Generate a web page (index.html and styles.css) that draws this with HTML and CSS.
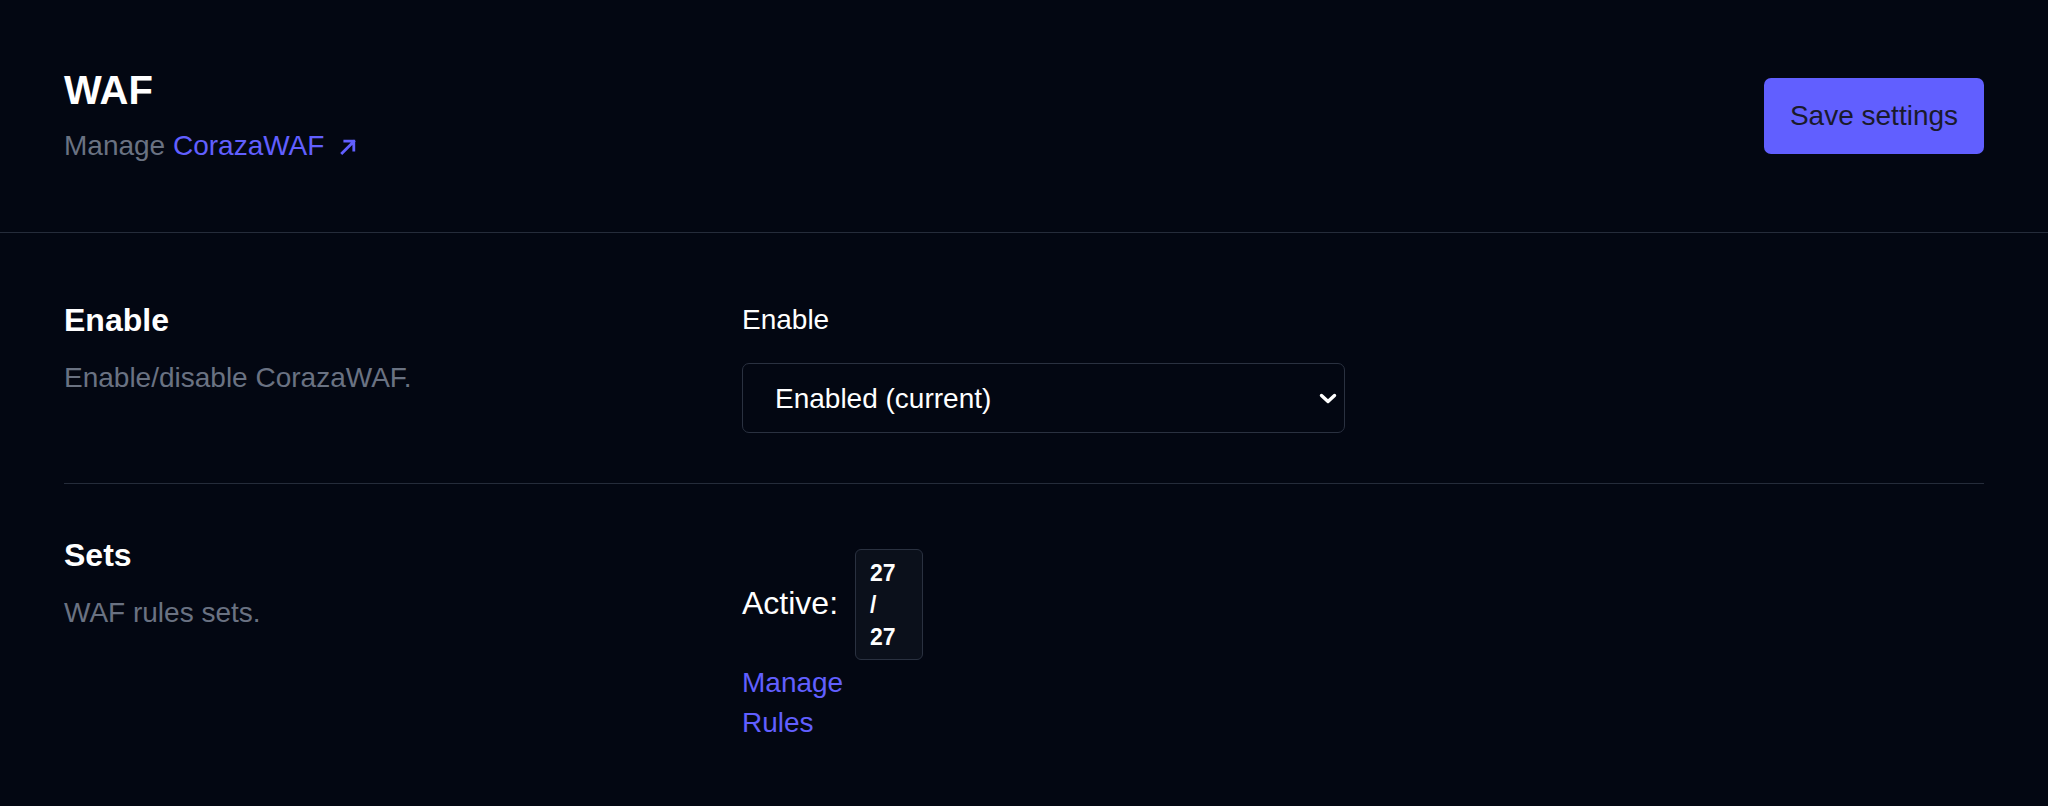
FILE: index.html
```html
<!DOCTYPE html>
<html lang="en">
<head>
<meta charset="utf-8">
<title>WAF</title>
<link rel="stylesheet" href="styles.css">
</head>
<body>
<div class="page">
  <header class="head">
    <div class="head-text">
      <h1 class="title">WAF</h1>
      <p class="subtitle">Manage <a class="ext-link" href="#">CorazaWAF<svg class="ext-icon" viewBox="0 0 16 16" width="16" height="16" aria-hidden="true"><path d="M2.2 14 L13.8 2.4 M4.8 2.2 H13.8 V11.2" fill="none" stroke="currentColor" stroke-width="2.8" stroke-linecap="square"/></svg></a></p>
    </div>
    <button class="btn-save" type="button">Save settings</button>
  </header>

  <main class="rows">
    <section class="row">
      <div class="row-info">
        <h2 class="row-title">Enable</h2>
        <p class="row-desc">Enable/disable CorazaWAF.</p>
      </div>
      <div class="row-control">
        <label class="field-label" for="enable">Enable</label>
        <div class="select-wrap">
          <select class="select" id="enable">
            <option>Enabled (current)</option>
            <option>Disabled</option>
          </select>
          <svg class="chev" viewBox="0 0 18 11" width="18" height="11" aria-hidden="true"><path d="M2.5 2.5 L9 8.5 L15.5 2.5" fill="none" stroke="#ffffff" stroke-width="3.4" stroke-linecap="round" stroke-linejoin="round"/></svg>
        </div>
      </div>
    </section>

    <section class="row">
      <div class="row-info">
        <h2 class="row-title">Sets</h2>
        <p class="row-desc">WAF rules sets.</p>
      </div>
      <div class="row-control">
        <div class="active-line">
          <span class="active-label">Active:</span>
          <span class="count">27 / 27</span>
        </div>
        <a class="rules-link" href="#">Manage Rules</a>
      </div>
    </section>
  </main>
</div>
</body>
</html>
```

FILE: styles.css
```css
* {
  box-sizing: border-box;
}

html, body {
  margin: 0;
  padding: 0;
  background: #030712;
}

body {
  font-family: "Liberation Sans", Arial, sans-serif;
  color: #ffffff;
  min-height: 806px;
}

.head {
  display: flex;
  align-items: center;
  justify-content: space-between;
  padding: 66px 64px 66px 64px;
  border-bottom: 1px solid #252c3a;
}

.title {
  margin: 0;
  font-size: 40px;
  line-height: 48px;
  font-weight: 700;
  color: #ffffff;
}

.subtitle {
  margin: 12px 0 0 0;
  font-size: 28px;
  line-height: 40px;
  color: #6a7282;
}

.ext-link {
  color: #615fff;
  text-decoration: none;
}

.ext-icon {
  margin-left: 16px;
  vertical-align: 0;
}

.btn-save {
  width: 220px;
  height: 76px;
  padding: 0;
  border: none;
  border-radius: 7px;
  background: #615fff;
  color: #1a1a2c;
  font-family: "Liberation Sans", Arial, sans-serif;
  font-size: 28px;
  line-height: 40px;
}

.rows {
  margin: 0 64px;
  padding-top: 16px;
}

.row {
  display: grid;
  grid-template-columns: 678px 1fr;
  padding: 51px 0 50px 0;
  border-bottom: 1px solid #252c3a;
}

.row:last-child {
  border-bottom: none;
}

.row-title {
  margin: 0;
  font-size: 32px;
  line-height: 40px;
  font-weight: 700;
  color: #ffffff;
}

.row-desc {
  margin: 17.5px 0 0 0;
  font-size: 28px;
  line-height: 40px;
  color: #6a7282;
}

.row-control {
  display: flex;
  flex-direction: column;
  align-items: flex-start;
}

.field-label {
  font-size: 28px;
  line-height: 40px;
  color: #ffffff;
}

.select-wrap {
  position: relative;
  margin-top: 23px;
  width: 603px;
}

.select {
  display: block;
  width: 603px;
  height: 70px;
  padding: 0 60px 0 32px;
  border: 1px solid #2a3140;
  border-radius: 7px;
  background: #030712;
  color: #ffffff;
  font-family: "Liberation Sans", Arial, sans-serif;
  font-size: 28px;
  -webkit-appearance: none;
  appearance: none;
  outline: none;
}

.chev {
  position: absolute;
  right: 8px;
  top: 30px;
  pointer-events: none;
}

.active-line {
  display: flex;
  align-items: center;
  margin-top: 14px;
}

.active-label {
  font-size: 32px;
  line-height: 40px;
  margin-right: 17px;
  position: relative;
  top: -2px;
}

.count {
  display: block;
  width: 68px;
  padding: 7px 16px 6px 14px;
  border: 1px solid #2a3140;
  border-radius: 6px;
  background: #0b101b;
  font-size: 23px;
  line-height: 32px;
  font-weight: 700;
  color: #ffffff;
}

.rules-link {
  display: block;
  width: min-content;
  margin-top: 3px;
  font-size: 28px;
  line-height: 40px;
  color: #615fff;
  text-decoration: none;
}
```
